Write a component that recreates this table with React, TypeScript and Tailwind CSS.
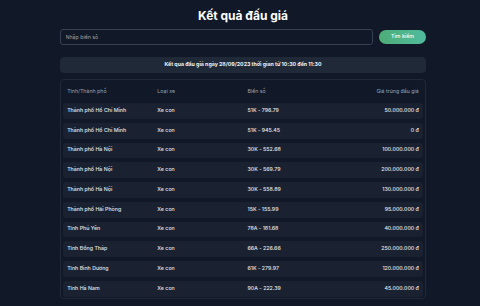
const rows = [
  { city: "Thành phố Hồ Chí Minh", type: "Xe con", plate: "51K - 796.79", price: "50.000.000 đ" },
  { city: "Thành phố Hồ Chí Minh", type: "Xe con", plate: "51K - 945.45", price: "0 đ" },
  { city: "Thành phố Hà Nội", type: "Xe con", plate: "30K - 552.68", price: "100.000.000 đ" },
  { city: "Thành phố Hà Nội", type: "Xe con", plate: "30K - 569.79", price: "200.000.000 đ" },
  { city: "Thành phố Hà Nội", type: "Xe con", plate: "30K - 558.89", price: "130.000.000 đ" },
  { city: "Thành phố Hải Phòng", type: "Xe con", plate: "15K - 155.99", price: "95.000.000 đ" },
  { city: "Tỉnh Phú Yên", type: "Xe con", plate: "78A - 181.68", price: "40.000.000 đ" },
  { city: "Tỉnh Đồng Tháp", type: "Xe con", plate: "66A - 226.66", price: "250.000.000 đ" },
  { city: "Tỉnh Bình Dương", type: "Xe con", plate: "61K - 279.97", price: "120.000.000 đ" },
  { city: "Tỉnh Hà Nam", type: "Xe con", plate: "90A - 222.39", price: "45.000.000 đ" },
]

const App = () => {
  return (
    <div className="min-h-[306px] w-[480px] bg-[#111827] font-['Inter',sans-serif] text-white flex justify-center pl-[6px] overflow-hidden">
      <div className="w-[366px] flex flex-col">
        {/* Title */}
        <h1 className="pt-[9px] h-[29px] text-center text-[12px] leading-[14px] font-bold">
          Kết quả đấu giá
        </h1>

        {/* Search */}
        <div className="flex items-center gap-[6px]">
          <input
            placeholder="Nhập biển số"
            className="flex-1 h-[15.5px] rounded-[3px] border border-[#374151] bg-transparent px-[4.5px] text-[5.25px] text-white placeholder:text-[#9ca3af] outline-none"
          />
          <button className="w-[47px] h-[13.5px] rounded-full bg-gradient-to-r from-[#4ead78] to-[#4fbb9d] text-[5.25px] font-medium text-white">
            Tìm kiếm
          </button>
        </div>

        {/* Banner */}
        <div className="mt-[12.5px] h-[16px] rounded-[4px] bg-[#1f2937] flex items-center justify-center text-[5.25px] font-bold text-[#f3f4f6]">
          Kết quả đấu giá ngày 28/09/2023 thời gian từ 10:30 đến 11:30
        </div>

        {/* Table */}
        <div className="mt-[6px] rounded-[4px] border border-[#1f2937] px-[1.7px] pb-[1.5px]">
          <div className="grid grid-cols-4 h-[23px] items-center text-[5.25px] text-[#9ca3af]">
            <div className="px-[4.5px]">Tỉnh/Thành phố</div>
            <div className="px-[4.5px]">Loại xe</div>
            <div className="px-[4.5px]">Biển số</div>
            <div className="px-[4.5px] text-right">Giá trúng đấu giá</div>
          </div>
          <div className="flex flex-col gap-[4px]">
            {rows.map((r, i) => (
              <div
                key={i}
                className="grid grid-cols-4 h-[15.75px] items-center rounded-[3px] bg-[#1a2232] text-[5.25px] font-medium text-[#e5e7eb]"
              >
                <div className="px-[4.5px]">{r.city}</div>
                <div className="px-[4.5px]">{r.type}</div>
                <div className="px-[4.5px]">{r.plate}</div>
                <div className="px-[4.5px] text-right">{r.price}</div>
              </div>
            ))}
          </div>
        </div>
      </div>
    </div>
  )
}

export default App
